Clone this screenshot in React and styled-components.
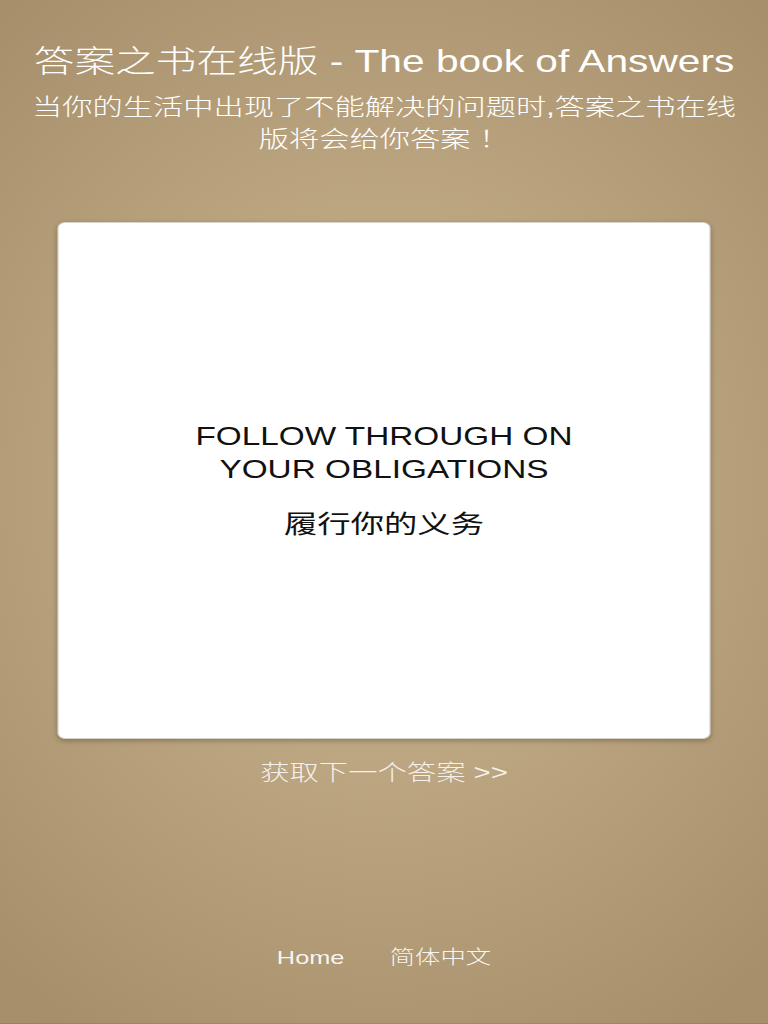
import styled, { createGlobalStyle } from "styled-components";

// the reference is a phone page stretched sideways: lay out at 576px and widen by 4/3
const GlobalStyle = createGlobalStyle`
html, body {
  margin: 0;
  padding: 0;
  background: #a8926c;
}
body {
  font-family: "Liberation Sans", "Noto Sans CJK SC", sans-serif;
  overflow: hidden;
}
`

const Page = styled.div`
width: 576px;
height: 1024px;
transform: scaleX(1.33334);
transform-origin: left top;
display: flex;
flex-direction: column;
align-items: center;
box-sizing: border-box;
border-bottom: 1px solid rgba(90, 70, 40, 0.18);
background: radial-gradient(ellipse 75% 62% at 50% 48%, #c7b18b 0%, #bca681 45%, #a68f6a 100%);
color: #fff;
font-weight: 300;
`

const Title = styled.h1`
margin: 43px 0 0;
font-size: 30.5px;
font-weight: 300;
line-height: 36px;
white-space: nowrap;
`

const Intro = styled.p`
margin: 12px 0 0;
width: 536px;
font-size: 22.7px;
line-height: 32px;
text-align: center;
`

const Card = styled.div`
margin-top: 67px;
width: 490px;
height: 517px;
box-sizing: border-box;
background: #fff;
border: 1px solid #d6d2cc;
border-radius: 6px;
box-shadow: 0 2px 5px rgba(60, 45, 20, 0.35);
display: flex;
flex-direction: column;
align-items: center;
justify-content: center;
color: #111;
font-weight: normal;
text-align: center;
`

const Answer = styled.div`
font-size: 25px;
line-height: 33px;
`

const Translation = styled.div`
margin-top: 22px;
font-size: 25px;
line-height: 33px;
`

const NextLink = styled.a`
margin-top: 19px;
font-size: 22px;
line-height: 30px;
color: rgba(255, 255, 255, 0.85);
text-decoration: none;
cursor: pointer;
`

const Footer = styled.nav`
margin-top: 158px;
display: flex;
gap: 34px;
font-size: 19px;
line-height: 24px;
`

const FooterLink = styled.a`
color: rgba(255, 255, 255, 0.92);
text-decoration: none;
`

const App = () => {
  return (
    <>
      <GlobalStyle />
      <Page>
        <Title>答案之书在线版 - The book of Answers</Title>
        <Intro>当你的生活中出现了不能解决的问题时,答案之书在线版将会给你答案 ！</Intro>
        <Card>
          <Answer>FOLLOW THROUGH ON<br />YOUR OBLIGATIONS</Answer>
          <Translation>履行你的义务</Translation>
        </Card>
        <NextLink>获取下一个答案 &gt;&gt;</NextLink>
        <Footer>
          <FooterLink>Home</FooterLink>
          <FooterLink>简体中文</FooterLink>
        </Footer>
      </Page>
    </>
  )
}

export default App;
